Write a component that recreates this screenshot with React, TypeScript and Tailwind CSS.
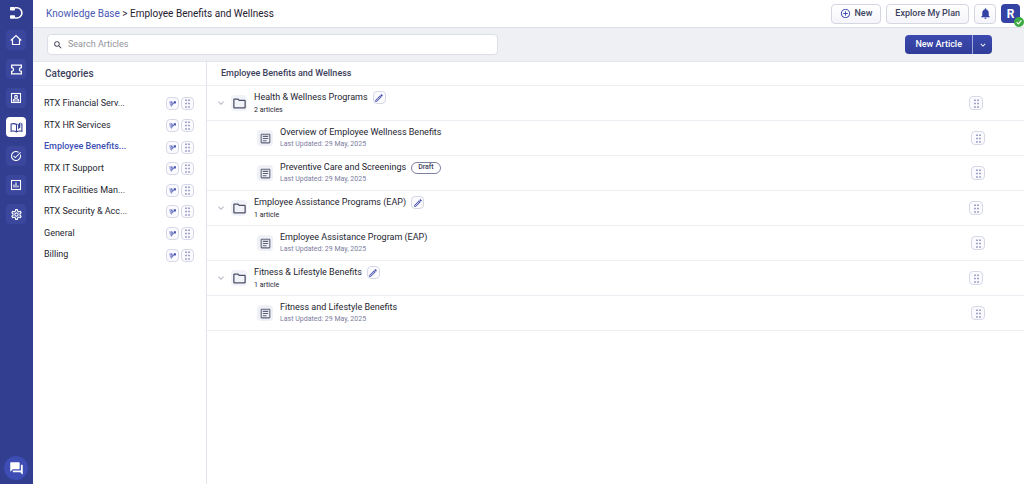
import React from 'react';
import {
  MdAddCircleOutline,
  MdForum,
  MdKeyboardArrowDown,
  MdNotifications,
  MdOutlineArticle,
  MdOutlineEdit,
  MdOutlineFolder,
  MdOutlineSettings,
  MdSearch,
  MdTaskAlt,
} from 'react-icons/md';

interface Article {
  title: string;
  updated: string;
  draft?: boolean;
}

interface Folder {
  title: string;
  articles: Article[];
}

const categories = [
  'RTX Financial Serv...',
  'RTX HR Services',
  'Employee Benefits...',
  'RTX IT Support',
  'RTX Facilities Man...',
  'RTX Security & Acc...',
  'General',
  'Billing',
];

const activeCategory = 'Employee Benefits...';

const folders: Folder[] = [
  {
    title: 'Health & Wellness Programs',
    articles: [
      { title: 'Overview of Employee Wellness Benefits', updated: '29 May, 2025' },
      { title: 'Preventive Care and Screenings', updated: '29 May, 2025', draft: true },
    ],
  },
  {
    title: 'Employee Assistance Programs (EAP)',
    articles: [{ title: 'Employee Assistance Program (EAP)', updated: '29 May, 2025' }],
  },
  {
    title: 'Fitness & Lifestyle Benefits',
    articles: [{ title: 'Fitness and Lifestyle Benefits', updated: '29 May, 2025' }],
  },
];

const Logo = () => (
  <svg viewBox="0 0 14 14" className="w-[14px] h-[14px]" fill="none">
    <path d="M6 1.800H7.800A5.100 5.100 0 0 1 7.800 12H6" stroke="#fff" strokeWidth="1.600" />
    <rect x="1" y="1" width="5" height="3.600" rx="0.800" fill="#fff" />
    <rect x="1" y="9.200" width="5" height="3.600" rx="0.800" fill="#fff" />
  </svg>
);

const HomeIcon = () => (
  <svg viewBox="0 0 24 24" className="w-3 h-3" fill="none" stroke="currentColor" strokeWidth="2.400">
    <path d="M1.500 13 12 3l10.500 10M5 11v10h14V11" />
  </svg>
);

const TicketIcon = () => (
  <svg viewBox="0 0 24 24" className="w-[13px] h-[13px]" fill="none" stroke="currentColor" strokeWidth="2.400">
    <path d="M3 4h18v4.500a3.500 3.500 0 0 0 0 7V20H3v-4.500a3.500 3.500 0 0 0 0-7z" />
  </svg>
);

const ContactsIcon = () => (
  <svg viewBox="0 0 24 24" className="w-3 h-3" fill="none" stroke="currentColor" strokeWidth="2.200">
    <rect x="3" y="3" width="18" height="18" />
    <circle cx="12" cy="9.500" r="2.800" />
    <path d="M6.500 18c0-3 2-4.500 5.500-4.500s5.500 1.500 5.500 4.500z" />
  </svg>
);

const BookIcon = () => (
  <svg viewBox="0 0 24 24" className="w-[13px] h-[13px]" fill="none" stroke="currentColor" strokeWidth="2">
    <path d="M12 20V6.500C9.500 4.800 5.500 4.500 2 5.500V19c3.500-1 7.500-.7 10 1zM12 20c2.500-1.700 6.500-2 10-1V5.500l-2-.4M12 6.500l2-1" />
    <path d="M15 6.500 19 2v10l-4 3z" fill="currentColor" stroke="none" />
  </svg>
);

const ReportsIcon = () => (
  <svg viewBox="0 0 24 24" className="w-3 h-3" fill="none" stroke="currentColor" strokeWidth="2.200">
    <rect x="3" y="3" width="18" height="18" />
    <path d="M8 17v-6M12 17V7M16 17v-4" />
  </svg>
);

const DragDots = () => (
  <svg viewBox="0 0 12 12" className="w-[9px] h-[9px] text-[#8186b5]" fill="currentColor">
    <path d="M3 0.500h2v2H3zM7 0.500h2v2H7zM3 5h2v2H3zM7 5h2v2H7zM3 9.500h2v2H3zM7 9.500h2v2H7z" />
  </svg>
);

const EditMark = () => (
  <svg viewBox="0 0 12 12" className="w-[9px] h-[9px]">
    <path d="M1.500 3h4L6 6.500 5 11 2.500 8z" fill="#a3abdb" />
    <path d="M4.500 8.500 8 5M4.500 3.500 6 5.500" stroke="#7079bd" strokeWidth="1.600" fill="none" />
    <path d="M7.500 3h3v3h-2z" fill="#3f4aa8" />
  </svg>
);

const iconButton =
  'flex items-center justify-center shrink-0 border border-[#d6d8e6] rounded bg-[#fafaff]';

const navItems = [
  { label: 'Home', icon: <HomeIcon /> },
  { label: 'Tickets', icon: <TicketIcon /> },
  { label: 'Contacts', icon: <ContactsIcon /> },
  { label: 'Knowledge Base', icon: <BookIcon />, active: true },
  { label: 'Tasks', icon: <MdTaskAlt size={12} /> },
  { label: 'Reports', icon: <ReportsIcon /> },
  { label: 'Settings', icon: <MdOutlineSettings size={13} /> },
];

function Sidebar() {
  return (
    <nav className="w-[33px] shrink-0 flex flex-col items-center bg-[#323e90] pt-[6px] pr-px">
      <Logo />
      <div className="flex flex-col gap-[9px] mt-[10px]">
        {navItems.map((item) => (
          <a
            key={item.label}
            href="#"
            aria-label={item.label}
            className={`w-5 h-5 rounded flex items-center justify-center ${
              item.active ? 'bg-white text-[#323e90]' : 'bg-[#3a479c] text-white'
            }`}
          >
            {item.icon}
          </a>
        ))}
      </div>
      <button
        aria-label="Chat"
        className="w-6 h-6 mt-auto mb-1 rounded-full bg-[#3d4db3] text-white flex items-center justify-center"
      >
        <MdForum size={15} />
      </button>
    </nav>
  );
}

function Header() {
  const button =
    'h-5 flex items-center border border-[#d4d6e2] rounded bg-linear-to-b from-white to-[#f5f5fa] text-[#3c3f5c]';

  return (
    <header className="h-7 shrink-0 flex items-center justify-between pl-[13px] pr-1 border-b border-[#dfe1ea]">
      <div className="text-[10px] text-[#1f2030]">
        <a href="#" className="text-[#4a5ab5]">Knowledge Base</a>
        {' > '}
        Employee Benefits and Wellness
      </div>
      <div className="flex items-center gap-[5px] text-[9px] font-medium">
        <button className={`${button} gap-[3px] px-2`}>
          <MdAddCircleOutline size={11} className="text-[#3f4db0]" />
          New
        </button>
        <button className={`${button} px-2`}>Explore My Plan</button>
        <button className={`${button} w-[22px] justify-center`} aria-label="Notifications">
          <MdNotifications size={13} className="text-[#3442a4]" />
        </button>
        <button className="relative w-[19px] h-[19px] rounded bg-[#3442a4] text-white text-[12px] font-bold">
          R
          <span className="absolute -right-1 -bottom-1 w-[10px] h-[10px] rounded-full bg-[#3dab42] flex items-center justify-center">
            <svg viewBox="0 0 10 10" className="w-2 h-2" fill="none" stroke="#fff" strokeWidth="1.400">
              <path d="M2 5.200 4.200 7.300 8 3" />
            </svg>
          </span>
        </button>
      </div>
    </header>
  );
}

function Toolbar() {
  return (
    <div className="h-[34px] shrink-0 flex items-center justify-between pl-[14px] pr-8 bg-[#eff0f4] border-b border-[#e3e5ed]">
      <label className="w-full max-w-[451px] h-[21px] flex items-center gap-[5px] px-[5px] bg-white border border-[#dddfe8] rounded-sm">
        <MdSearch size={10} className="text-[#33344a] shrink-0" />
        <input
          type="text"
          aria-label="Search Articles"
          placeholder="Search Articles"
          className="w-full text-[9px] outline-none placeholder:text-[#92939c]"
        />
      </label>
      <div className="flex h-[19px] shrink-0 rounded overflow-hidden bg-linear-to-b from-[#3c4ab0] to-[#2f3c98] text-white">
        <button className="px-[10px] text-[9px] font-medium">New Article</button>
        <button className="w-5 border-l border-[#a3aadb] flex items-center justify-center" aria-label="More options">
          <MdKeyboardArrowDown size={10} />
        </button>
      </div>
    </div>
  );
}

function CategoryList() {
  return (
    <aside className="w-[174px] shrink-0 border-r border-[#e3e5ed]">
      <h2 className="h-6 flex items-center pl-3 text-[10px] font-medium text-[#3c3f5c] border-b border-[#eceef3]">
        Categories
      </h2>
      <ul className="h-[173px] mt-[7px] flex flex-col pl-[11px] pr-3">
        {categories.map((name) => (
          <li key={name} className="flex-1 flex items-center gap-[2px]">
            <a
              href="#"
              className={`flex-1 text-[9px] ${
                name === activeCategory ? 'text-[#3d4fb5] font-medium' : 'text-[#24252f]'
              }`}
            >
              {name}
            </a>
            <button className={`${iconButton} w-[13px] h-[13px]`} aria-label={`Edit ${name}`}>
              <EditMark />
            </button>
            <button className={`${iconButton} w-[13px] h-[13px]`} aria-label={`Move ${name}`}>
              <DragDots />
            </button>
          </li>
        ))}
      </ul>
    </aside>
  );
}

function FolderRow({ folder }: { folder: Folder }) {
  const count = folder.articles.length;

  return (
    <div className="h-[35px] flex items-center pl-2 pr-[41px] border-b border-[#eceef3]">
      <button aria-label="Collapse" className="text-[#b9bbc9]">
        <MdKeyboardArrowDown size={12} />
      </button>
      <span className="w-4 h-4 ml-1 mr-[7px] rounded bg-[#f2f3f8] flex items-center justify-center text-[#4c4f68]">
        <MdOutlineFolder size={15} />
      </span>
      <div className="flex-1 pt-px">
        <div className="flex items-center gap-[5px] h-[13px] text-[9px] text-[#24252f]">
          {folder.title}
          <button className={`${iconButton} w-[13px] h-[13px]`} aria-label={`Edit ${folder.title}`}>
            <MdOutlineEdit size={10} className="text-[#3f4aa8]" />
          </button>
        </div>
        <div className="text-[7px] leading-[12px] text-[#24252f]">
          {count} {count === 1 ? 'article' : 'articles'}
        </div>
      </div>
      <button className={`${iconButton} w-[14px] h-[14px]`} aria-label={`Move ${folder.title}`}>
        <DragDots />
      </button>
    </div>
  );
}

function ArticleRow({ article }: { article: Article }) {
  return (
    <div className="h-[35px] flex items-center pl-[50px] pr-[39px] border-b border-[#eceef3]">
      <span className="w-4 h-4 mr-[7px] rounded bg-[#f0f1f6] flex items-center justify-center text-[#5f627b]">
        <MdOutlineArticle size={13} />
      </span>
      <div className="flex-1">
        <div className="flex items-center gap-[5px] h-3 text-[9px] text-[#24252f]">
          <a href="#">{article.title}</a>
          {article.draft && (
            <span className="h-3 px-[6px] flex items-center border border-[#7d809c] rounded-full text-[7px] font-medium text-[#3c3f5c]">
              Draft
            </span>
          )}
        </div>
        <div className="text-[7px] leading-[11px] text-[#7b7da0]">Last Updated: {article.updated}</div>
      </div>
      <button className={`${iconButton} w-[14px] h-[14px]`} aria-label={`Move ${article.title}`}>
        <DragDots />
      </button>
    </div>
  );
}

export default function App() {
  return (
    <div className="min-h-screen flex bg-white font-['Roboto',sans-serif]">
      <Sidebar />
      <div className="flex-1 min-w-0 flex flex-col">
        <Header />
        <Toolbar />
        <div className="flex-1 flex">
          <CategoryList />
          <main className="flex-1 min-w-0">
            <h1 className="h-6 flex items-center pl-[14px] text-[9px] font-medium text-[#3c3f5c] border-b border-[#eceef3]">
              Employee Benefits and Wellness
            </h1>
            {folders.map((folder) => (
              <section key={folder.title}>
                <FolderRow folder={folder} />
                {folder.articles.map((article) => (
                  <ArticleRow key={article.title} article={article} />
                ))}
              </section>
            ))}
          </main>
        </div>
      </div>
    </div>
  );
}
